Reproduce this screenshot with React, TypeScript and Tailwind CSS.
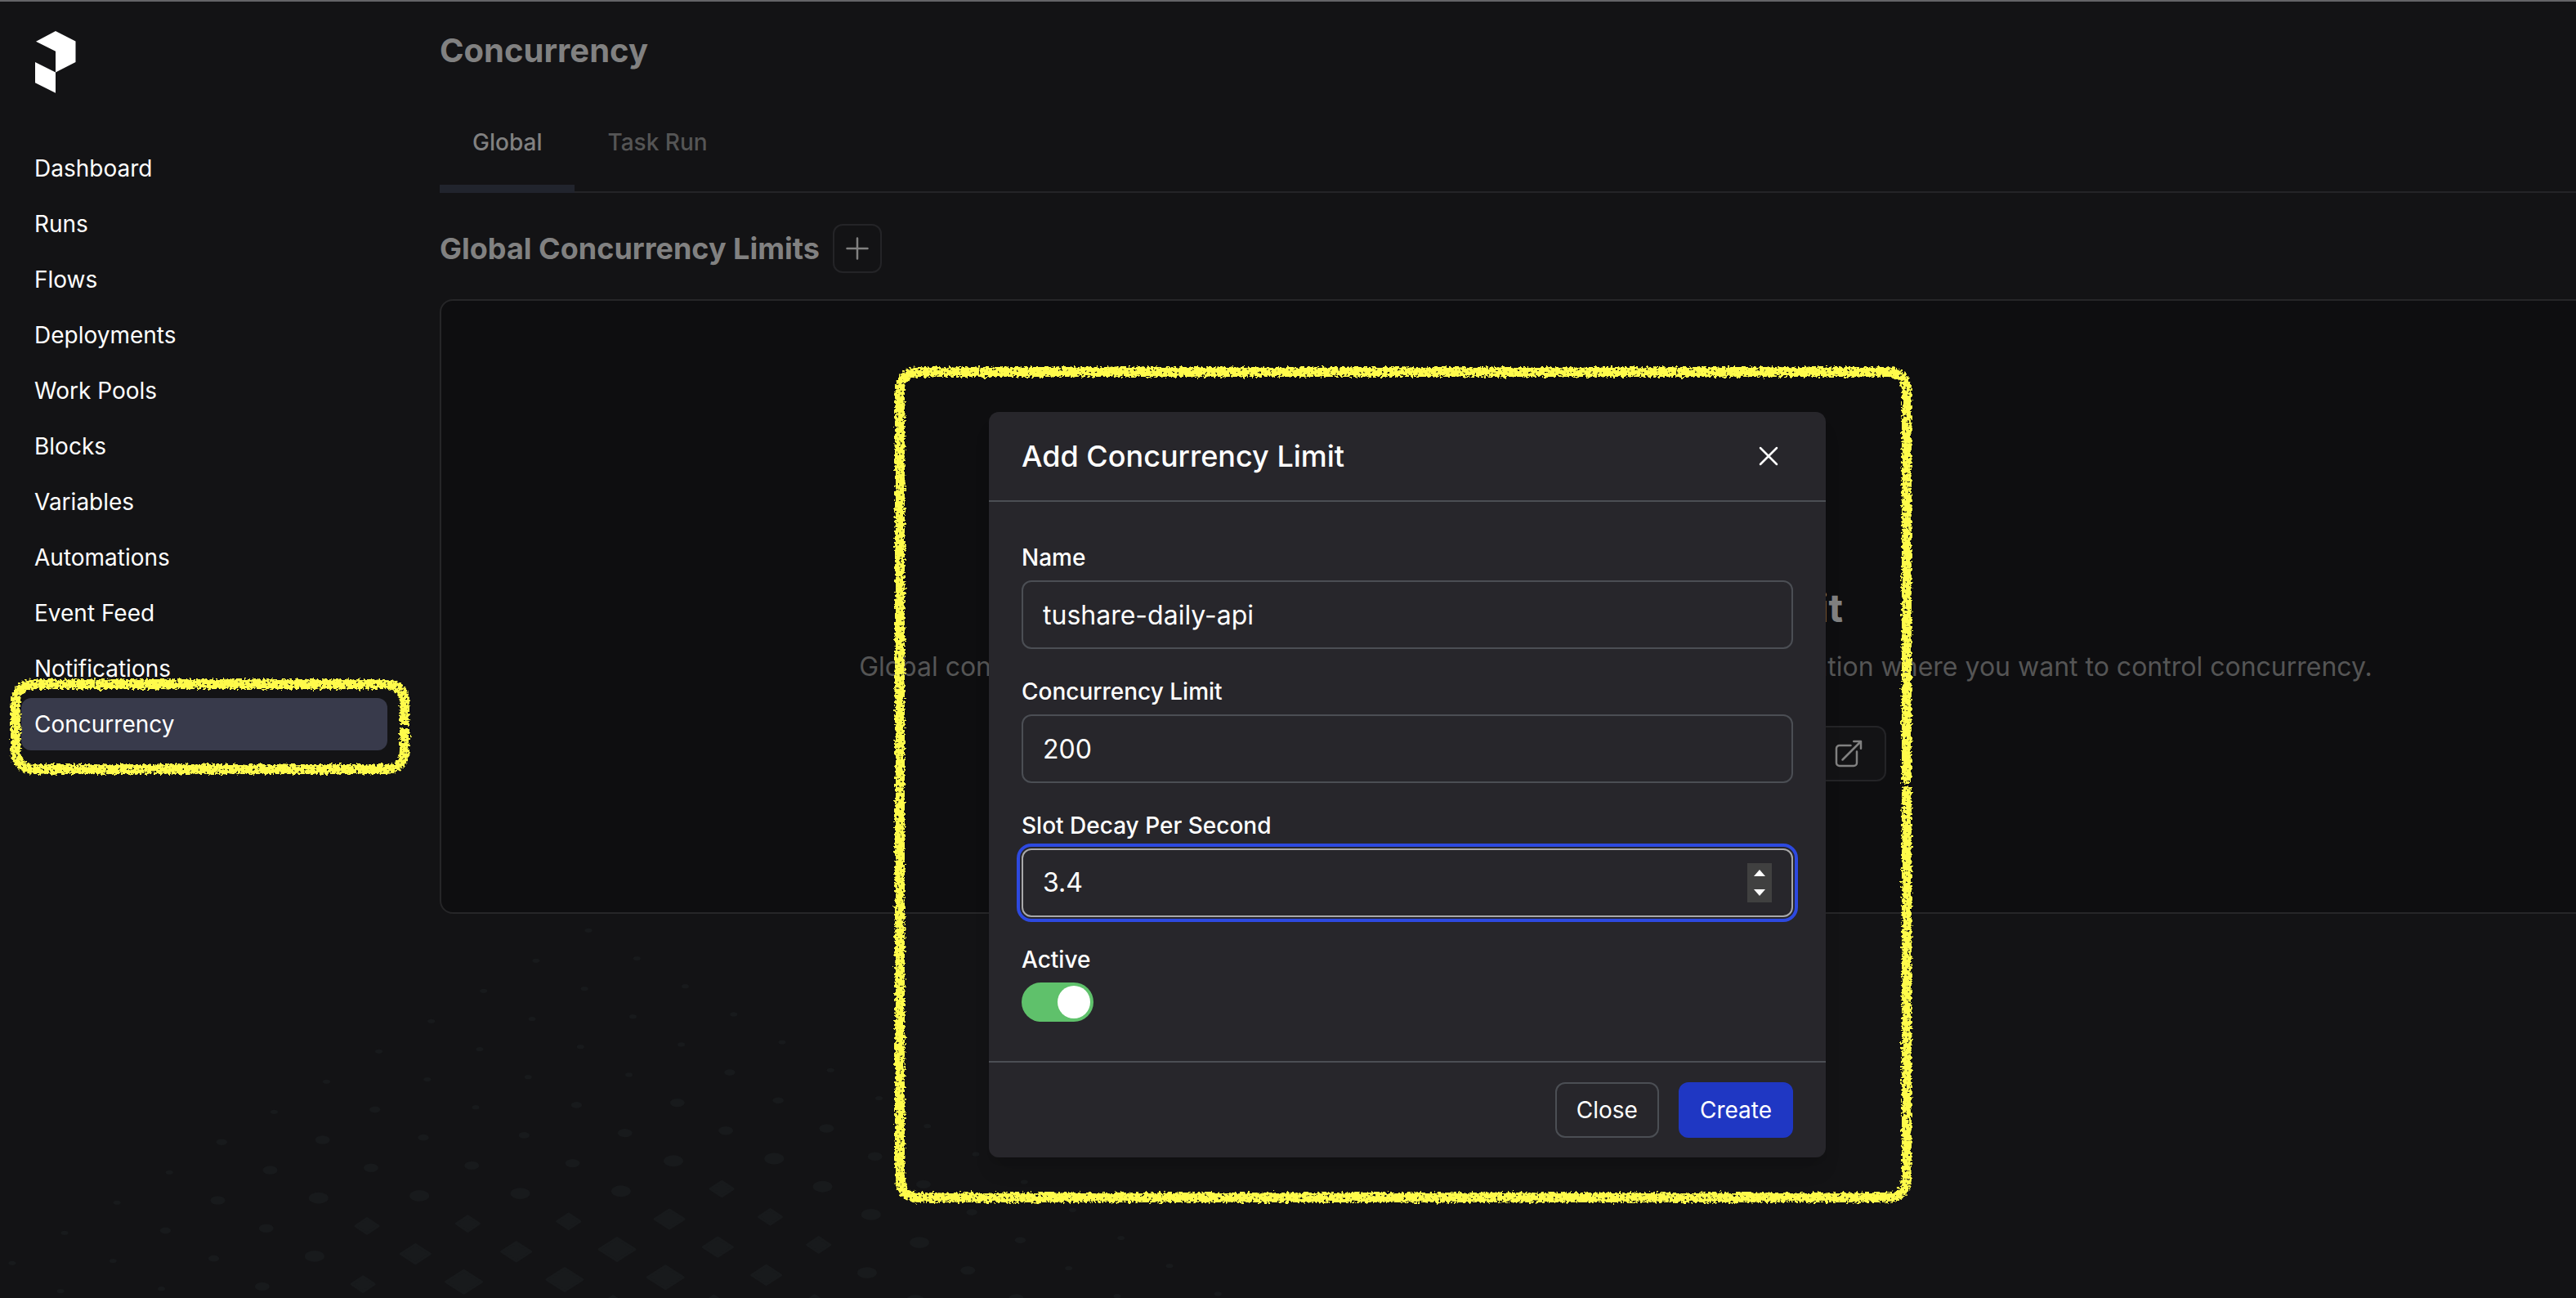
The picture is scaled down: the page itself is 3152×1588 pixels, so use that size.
import { useId, type ReactNode } from "react";

const NAV = [
  "Dashboard",
  "Runs",
  "Flows",
  "Deployments",
  "Work Pools",
  "Blocks",
  "Variables",
  "Automations",
  "Event Feed",
  "Notifications",
  "Concurrency",
];

// Half widths of the backdrop marks; each row runs down and to the right.
const DOTS: number[][] = [
  [4.5, 4.5, 4.5, 4.5, 4.5, 4.5, 4.5, 4.5, 4.5, 4.5, 4.5, 4.5, 4.5, 4.5],
  [4.5, 4.5, 4.5, 4.5, 6.7, 6.7, 9, 9, 9, 6.7, 6.7, 4.5, 4.5],
  [4.5, 4.5, 4.5, 4.5, 9, 9, 12, 12, 12, 12, 9, 9, 6.7],
  [4.5, 4.5, 4.5, 6.7, 9, 12, 16, 16, 16, 12, 12],
  [4.5, 4.5, 4.5, 6.7, 9, 12, 20, 20, 20, 16],
  [4.5, 6.7, 6.7, 9, 12, 16, 24, 24, 20],
  [4.5, 9, 9, 12, 16, 20, 24, 24],
  [6.7, 9, 12, 16, 20, 24, 20],
  [4.5, 9, 9, 12, 16, 16],
  [4.5, 6.7, 6.7, 9],
  [4.5, 4.5, 4.5],
  [4.5, 4.5],
];

function Backdrop() {
  return (
    <svg
      aria-hidden="true"
      className="pointer-events-none absolute -top-0.5 left-0 h-[1588px] w-[1600px]"
      viewBox="0 0 1600 1588"
      fill="#181a1c"
      stroke="#181a1c"
      strokeWidth="3"
      strokeLinejoin="round"
    >
      {DOTS.map((row, j) =>
        row.map((w, i) => {
          const x = 720 + 59.25 * i - 64.1 * j;
          const y = 1138.3 + 34.2 * i + 37 * j;
          const h = w * 0.58;
          return w < 16 ? (
            <ellipse key={`${i}-${j}`} cx={x} cy={y} rx={w} ry={h} strokeWidth="0" />
          ) : (
            <path key={`${i}-${j}`} d={`M${x - w + 2} ${y}L${x} ${y - h}L${x + w - 2} ${y}L${x} ${y + h}Z`} />
          );
        }),
      )}
    </svg>
  );
}

function Icon({ d }: { d: string }) {
  return (
    <svg
      aria-hidden="true"
      className="size-10"
      viewBox="0 0 24 24"
      fill="none"
      stroke="currentColor"
      strokeWidth="1.5"
      strokeLinecap="round"
      strokeLinejoin="round"
    >
      <path d={d} />
    </svg>
  );
}

const PLUS = "M12 4.5v15m7.5-7.5h-15";
const CROSS = "M6 18L18 6M6 6l12 12";
const EXTERNAL =
  "M13.5 6H5.25A2.25 2.25 0 003 8.25v10.5A2.25 2.25 0 005.25 21h10.5A2.25 2.25 0 0018 18.75V10.5m-10.5 6L21 3m0 0h-5.25M21 3v5.25";

// A crayon outline: one stroke that starts and ends halfway down the right side.
function Crayon({ width, height, className }: { width: number; height: number; className: string }) {
  const id = useId();
  const a = 7;
  const r = width - 7;
  const b = height - 7;
  const m = height / 2;
  const c = 24;
  return (
    <svg
      aria-hidden="true"
      className={`pointer-events-none absolute z-10 overflow-visible ${className}`}
      width={width}
      height={height}
      viewBox={`0 0 ${width} ${height}`}
      fill="none"
    >
      <filter id={id} filterUnits="userSpaceOnUse" x="-10" y="-10" width={width + 20} height={height + 20} colorInterpolationFilters="sRGB">
        <feTurbulence type="fractalNoise" baseFrequency="0.3" numOctaves="2" seed="4" result="noise" />
        <feDisplacementMap in="SourceGraphic" in2="noise" scale="8" xChannelSelector="R" yChannelSelector="G" result="rough" />
        <feColorMatrix in="noise" type="matrix" values="0 0 0 0 0  0 0 0 0 0  0 0 0 0 0  0 0 9 0 -2.1" result="grain" />
        <feComposite in="rough" in2="grain" operator="in" />
      </filter>
      <path
        filter={`url(#${id})`}
        stroke="#fffb4b"
        strokeWidth="12"
        d={`M${r} ${m + 2}V${b - c}Q${r} ${b} ${r - c} ${b}H${a + c}Q${a} ${b} ${a} ${b - c}V${a + c}Q${a} ${a} ${a + c} ${a}H${r - c}Q${r} ${a} ${r} ${a + c}V${m - 2}`}
      />
    </svg>
  );
}

function Sidebar() {
  return (
    <aside className="w-[500px] shrink-0 px-[26px] pt-8">
      <a href="#home" aria-label="Home" className="block px-4">
        <svg aria-hidden="true" className="h-20 w-[52px]" viewBox="42 34 52 80" fill="#fff">
          <path d="M68 38L92.500 50.500V76L68 88.500V62.700L44 50.700Z" />
          <path d="M43 76L68 88.500V113.700L43 101.300Z" />
        </svg>
      </a>
      <nav className="mt-[60px]">
        <ul className="flex flex-col gap-1">
          {NAV.map((name) => (
            <li key={name} className="relative">
              <a
                href={`#${name}`}
                className={`flex h-16 items-center rounded-xl px-4 text-[28px] leading-10 text-white ${
                  name === "Concurrency" ? "bg-[#383a4b]" : ""
                }`}
              >
                {name}
              </a>
              {name === "Concurrency" && <Crayon width={490} height={118} className="-left-3.5 -top-6" />}
            </li>
          ))}
        </ul>
      </nav>
    </aside>
  );
}

function Page() {
  return (
    <main className="relative flex-1 pl-[38px] pr-7 pt-8 text-[#818181]">
      <h1 className="text-[40px] font-bold leading-[56px]">Concurrency</h1>
      <div role="tablist" className="mt-9 flex h-[110px] border-b-2 border-[#242427] text-[28px] font-medium leading-10">
        <button role="tab" aria-selected="true" className="-mb-0.5 border-b-[10px] border-[#21242d] px-10 pb-7 pt-6">
          Global
        </button>
        <button role="tab" aria-selected="false" className="px-10 pb-9 pt-6 text-[#555]">
          Task Run
        </button>
      </div>
      <div className="mt-[38px] flex items-center gap-4">
        <h2 className="text-[36px] font-bold leading-[56px]">Global Concurrency Limits</h2>
        <button
          aria-label="Add global concurrency limit"
          className="flex size-[60px] items-center justify-center rounded-xl border-2 border-[#242427]"
        >
          <Icon d={PLUS} />
        </button>
      </div>
      <section className="mt-8 flex h-[752px] flex-col items-center justify-end rounded-2xl border-2 border-[#262628] bg-[#0e0e10] pb-[160px]">
        <h3 className="text-[48px] font-bold leading-[64px]">Add a concurrency limit</h3>
        <p className="mt-4 text-[32px] leading-[48px] text-[#555]">
          Global concurrency limits can be applied to flow runs, task runs and any operation where you want to control
          concurrency.
        </p>
        <div className="mt-12 flex gap-4 text-[28px] font-medium">
          <button className="flex h-[68px] items-center gap-2 rounded-xl bg-[#101c60] px-6">
            Add Concurrency Limit
            <Icon d={PLUS} />
          </button>
          <button className="flex h-[68px] items-center gap-2 rounded-xl border-2 border-[#242427] bg-[#131315] px-6">
            View Docs
            <Icon d={EXTERNAL} />
          </button>
        </div>
      </section>
    </main>
  );
}

function Field({ id, label, children }: { id: string; label: string; children: ReactNode }) {
  return (
    <div className="flex flex-col gap-2">
      <label htmlFor={id} className="text-[28px] font-medium leading-10">
        {label}
      </label>
      {children}
    </div>
  );
}

function Dialog() {
  return (
    <div role="dialog" aria-labelledby="dialog-title" className="pointer-events-auto relative w-[1024px]">
      <div className="rounded-xl bg-[#27262b] text-white shadow-xl">
        <header className="flex items-center justify-between border-b-2 border-[#4b4e54] px-10 py-6">
          <h2 id="dialog-title" className="text-[36px] font-medium leading-[56px]">
            Add Concurrency Limit
          </h2>
          <button aria-label="Close dialog" className="flex size-[60px] items-center justify-center">
            <Icon d={CROSS} />
          </button>
        </header>
        <form className="flex flex-col gap-8 px-10 py-12">
          <Field id="name" label="Name">
            <input
              id="name"
              type="text"
              defaultValue="tushare-daily-api"
              className="h-[84px] rounded-xl border-2 border-[#4b4e54] bg-transparent px-6 text-[32px] outline-none"
            />
          </Field>
          <Field id="limit" label="Concurrency Limit">
            <input
              id="limit"
              type="text"
              inputMode="numeric"
              defaultValue="200"
              className="h-[84px] rounded-xl border-2 border-[#4b4e54] bg-transparent px-6 text-[32px] outline-none"
            />
          </Field>
          <Field id="decay" label="Slot Decay Per Second">
            <div className="flex h-[84px] items-center rounded-xl border-2 border-[#a9a9aa] px-6 outline-4 outline-offset-2 outline-[#2d49e0]">
              <input
                id="decay"
                type="text"
                inputMode="decimal"
                defaultValue="3.4"
                className="min-w-0 flex-1 bg-transparent text-[32px] outline-none"
              />
              <div className="flex h-12 w-[30px] flex-col bg-[#404040]">
                <button type="button" aria-label="Increase" className="flex flex-1 items-center justify-center">
                  <svg aria-hidden="true" className="h-2 w-3.5" viewBox="0 0 14 8" fill="#fff">
                    <path d="M7 0L14 8H0Z" />
                  </svg>
                </button>
                <button type="button" aria-label="Decrease" className="flex flex-1 items-center justify-center">
                  <svg aria-hidden="true" className="h-2 w-3.5" viewBox="0 0 14 8" fill="#fff">
                    <path d="M7 8L0 0H14Z" />
                  </svg>
                </button>
              </div>
            </div>
          </Field>
          <Field id="active" label="Active">
            <input
              id="active"
              type="checkbox"
              role="switch"
              defaultChecked
              className="flex h-12 w-[88px] appearance-none items-center rounded-full bg-[#5fc16b] p-1 before:size-10 before:rounded-full before:bg-white checked:justify-end"
            />
          </Field>
        </form>
        <footer className="flex justify-end gap-6 border-t-2 border-[#4b4e54] px-10 py-6 text-[28px] leading-10">
          <button className="h-[68px] rounded-xl border-2 border-[#4b4e54] px-6">Close</button>
          <button className="h-[68px] rounded-xl border-2 border-[#1f37c3] bg-[#1f37c3] px-6">Create</button>
        </footer>
      </div>
      <Crayon width={1246} height={1024} className="-left-[116px] -top-14" />
    </div>
  );
}

export default function App() {
  return (
    <div className="min-h-screen overflow-hidden bg-[#131315] font-['Inter',sans-serif]">
      <div className="relative flex min-h-screen w-[calc(100%+292px)] border-t-2 border-[#646467]">
        <Backdrop />
        <Sidebar />
        <Page />
        <div className="pointer-events-none absolute inset-0 flex items-start justify-center pt-[502px]">
          <Dialog />
        </div>
      </div>
    </div>
  );
}
